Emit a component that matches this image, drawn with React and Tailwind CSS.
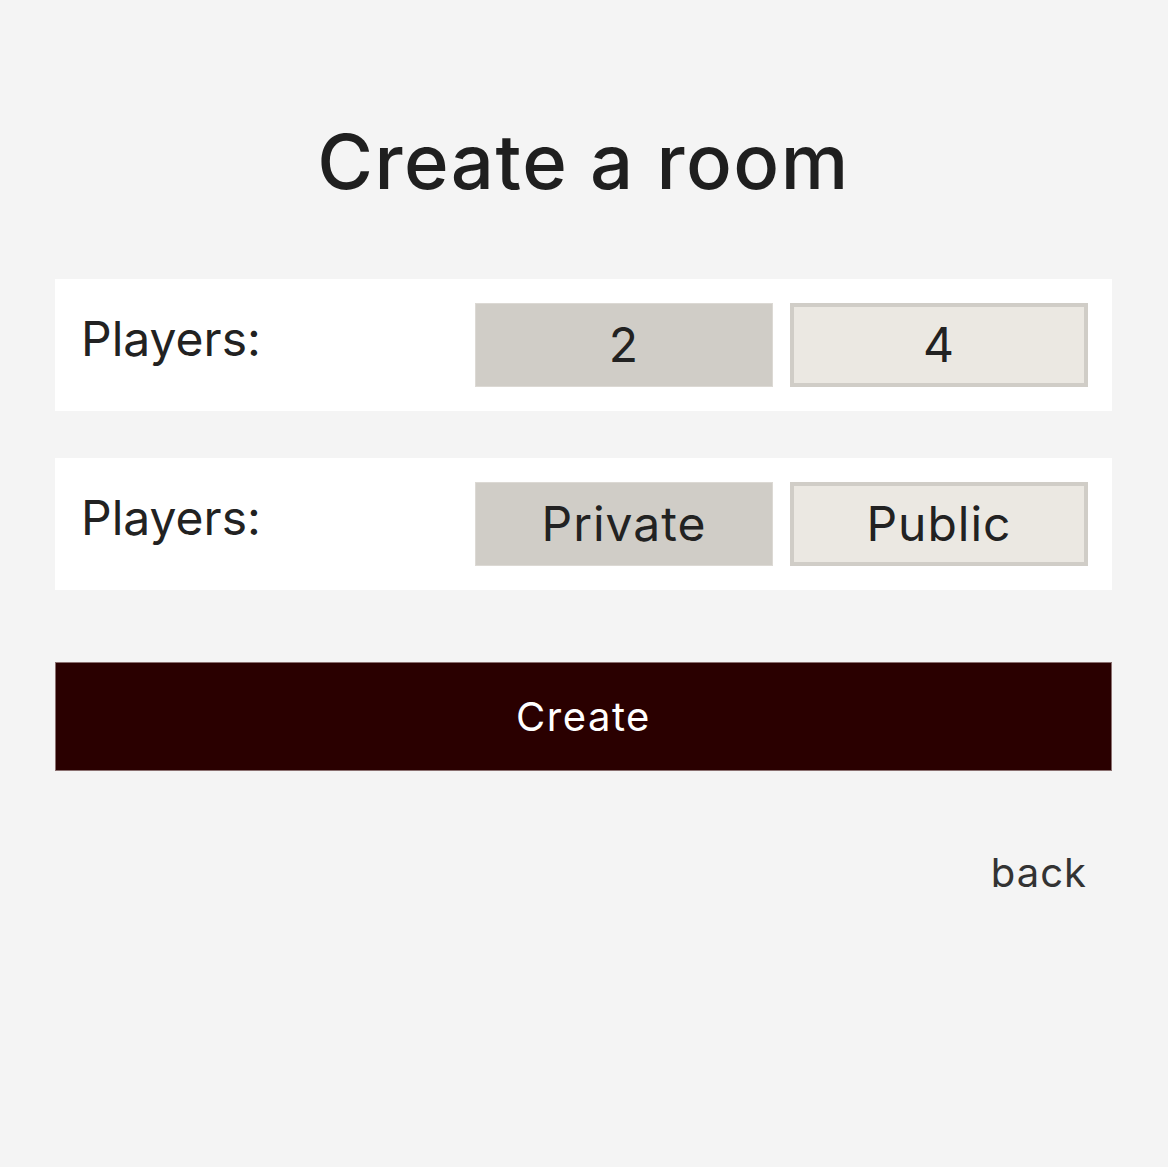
import React, { useState } from 'react'

const font = { fontFamily: 'Inter, "Noto Sans", sans-serif' }

function Option({ label, active, onClick }) {
  return (
    <button
      onClick={onClick}
      className={
        'w-[298px] h-[84px] flex items-center justify-center text-[48px] tracking-[1px] text-[#222] ' +
        (active ? 'bg-[#d0cdc7] border border-[#dcd9d4]' : 'bg-[#ebe8e2] border-4 border-[#d0cdc7]')
      }
    >
      {label}
    </button>
  )
}

function Row({ options, value, onChange }) {
  return (
    <div className="bg-white h-[132px] flex items-center pl-[26px] pr-[24px]">
      <span className="flex-1 text-[48px] text-[#222] -mt-[12px]">Players:</span>
      <div className="flex gap-[17px]">
        {options.map(o => (
          <Option key={o} label={o} active={value === o} onClick={() => onChange(o)} />
        ))}
      </div>
    </div>
  )
}

export default function App() {
  const [players, setPlayers] = useState('2')
  const [visibility, setVisibility] = useState('Private')

  return (
    <div className="min-h-[1167px] bg-[#f4f4f4] pl-[55px] pr-[56px]" style={font}>
      <h1 className="pt-[116px] text-center text-[76px] leading-[90px] font-medium text-[#1f1f1f] tracking-[1.5px]">
        Create a room
      </h1>

      <div className="mt-[73px] flex flex-col gap-[47px]">
        <Row options={['2', '4']} value={players} onChange={setPlayers} />
        <Row options={['Private', 'Public']} value={visibility} onChange={setVisibility} />
      </div>

      <button className="mt-[72px] w-full h-[109px] bg-[#2a0000] border border-[#8a7070] text-white text-[40px] tracking-[1.5px]">
        Create
      </button>

      <div className="flex justify-end pr-[25px] mt-[72px]">
        <a className="text-[40px] tracking-[1px] text-[#333] cursor-pointer">back</a>
      </div>
    </div>
  )
}
